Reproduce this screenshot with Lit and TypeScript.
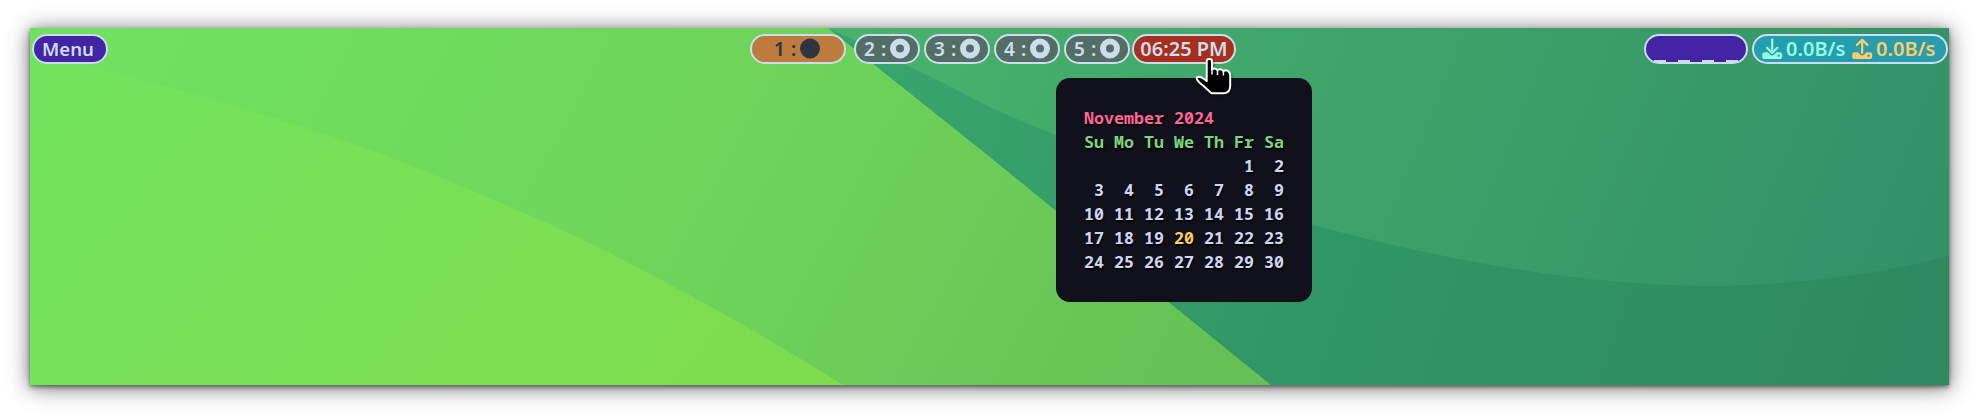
import { LitElement, html, css, svg } from "lit";
import { customElement } from "lit/decorators.js";

const WEEKS = [
  ["", "", "", "", "", "1", "2"],
  ["3", "4", "5", "6", "7", "8", "9"],
  ["10", "11", "12", "13", "14", "15", "16"],
  ["17", "18", "19", "20", "21", "22", "23"],
  ["24", "25", "26", "27", "28", "29", "30"],
];
const DAYS = ["Su", "Mo", "Tu", "We", "Th", "Fr", "Sa"];

@customElement("calendar-popup")
export class CalendarPopup extends LitElement {
  static styles = css`
    :host {
      display: block;
      box-sizing: border-box;
      width: 256px;
      height: 224px;
      padding: 28px 28px;
      border-radius: 14px;
      background: #11111b;
      color: #cdd6f4;
      font: 700 16.67px/24px "Noto Sans Mono", "DejaVu Sans Mono", monospace;
      text-shadow: 1px 2px 1px #000;
    }
    .month { color: #ff6699; white-space: pre; }
    .grid { display: grid; grid-template-columns: repeat(7, 20px); column-gap: 10px; grid-auto-rows: 24px; text-align: right; }
    .day { color: #7fd47f; }
    .today { color: #ffcc66; }
  `;
  render() {
    return html`
      <div class="month">November 2024</div>
      <div class="grid">
        ${DAYS.map((d) => html`<span class="day">${d}</span>`)}
        ${WEEKS.flat().map((d) => html`<span class=${d === "20" ? "today" : "date"}>${d}</span>`)}
      </div>
    `;
  }
}

const drive = (up: boolean) => svg`
  <path d=${up ? "M10.2 15V2.2M5 6.9L10.2 1.7L15.4 6.9" : "M10.2 1.5V14M5 9.8L10.2 15L15.4 9.8"}
    fill="none" stroke="currentColor" stroke-width="2.2" stroke-linecap="round" stroke-linejoin="round"/>
  <path fill="currentColor" fill-rule="evenodd" d="M2.8 14.2H5.8L8.4 16.8Q10.2 18.2 12 16.8L14.6 14.2H17.6A2.6 2.6 0 0 1 20.2 16.8V18.4A2.6 2.6 0 0 1 17.6 21H2.8A2.6 2.6 0 0 1 .2 18.4V16.8A2.6 2.6 0 0 1 2.8 14.2ZM16.6 16.4a1.2 1.2 0 1 0 .01 0Z"/>`;

@customElement("app-root")
export class AppRoot extends LitElement {
  static styles = css`
    :host { display: block; box-sizing: border-box; width: 1979px; height: 417px; padding: 28px 30px 32px; background: #fff; overflow: hidden; }
    .desktop { position: relative; width: 1919px; height: 357px; box-shadow: 0 2px 4px rgba(0,0,0,.45), 0 2px 18px rgba(0,0,0,.5), 0 4px 28px rgba(0,0,0,.12); }
    .wallpaper { position: absolute; inset: 0; display: block; }
    .bar { position: relative; display: grid; grid-template-columns: 1fr auto 1fr; padding: 6px 1px 0 2px; }
    .side, .center { display: flex; }
    .center { padding-left: 6px; }
    .right { justify-content: flex-end; gap: 4px; }
    .pill {
      box-sizing: border-box; height: 30px; border: 2px solid #cddcee; border-radius: 15px;
      display: flex; align-items: center; color: #cddcee; white-space: pre;
      font: 600 20px/26px "Noto Sans", sans-serif;
    }
    .menu { width: 76px; padding-left: 8px; font-size: 18.6px; background: #4224a4; }
    .ws { width: 66px; margin-right: 4px; padding-left: 8px; background: #546e66; }
    .num { display: flex; width: 26px; font-size: 19px; gap: 6px; }
    .active { width: 96px; margin-right: 8px; padding-left: 22px; background: #bd7b3d; color: #2e3440; }
    .clock { width: 104px; justify-content: center; background: #a6301b; margin-left: -2px; }
    .cava { width: 104px; background: #4224a4; align-items: flex-end; padding-left: 8px; }
    .levels { display: flex; gap: 12px; height: 2px; }
    .level { width: 12px; height: 2px; background: #cddcee; }
    .net { width: 196px; padding-left: 8px; background: #269caf; }
    .down, .up { display: flex; align-items: center; }
    .down { color: #94ffe0; width: 90px; }
    .up { color: #ffcc66; }
    .drive { margin-right: 3px; flex: none; }
    .popup { position: absolute; left: 1026px; top: 50px; }
    .pointer { position: absolute; left: 1164px; top: 29px; filter: drop-shadow(1px 2px 1px rgba(0,0,0,.4)); }
  `;

  render() {
    return html`
      <div class="desktop">
        <svg class="wallpaper" width="1919" height="357" viewBox="30 28 1919 357">
          <defs>
            <linearGradient id="g1" gradientUnits="userSpaceOnUse" x1="100" y1="28" x2="1100" y2="560"><stop offset="0" stop-color="#70e060"/><stop offset=".3" stop-color="#6fdb5d"/><stop offset=".65" stop-color="#6dd059"/><stop offset="1" stop-color="#65c155"/></linearGradient>
            <linearGradient id="g2" gradientUnits="userSpaceOnUse" x1="30" y1="28" x2="600" y2="480"><stop offset="0" stop-color="#72e35f"/><stop offset="1" stop-color="#7edd4f"/></linearGradient>
            <linearGradient id="g3" gradientUnits="userSpaceOnUse" x1="850" y1="28" x2="1850" y2="430"><stop offset="0" stop-color="#48b36c"/><stop offset="1" stop-color="#339167"/></linearGradient>
            <linearGradient id="g4" gradientUnits="userSpaceOnUse" x1="900" y1="60" x2="1900" y2="385"><stop offset="0" stop-color="#38a46d"/><stop offset=".4" stop-color="#319766"/><stop offset="1" stop-color="#2e8a5e"/></linearGradient>
          </defs>
          <rect x="30" y="28" width="1919" height="357" fill="url(#g4)"/>
          <path d="M828 28Q905 63 990 107Q1020 121 1056 135Q1190 191 1313 225Q1540 286 1716 286Q1840 284 1949 256V28Z" fill="url(#g3)"/>
          <path d="M30 28H828L990 157L1056 211L1271 385H30Z" fill="url(#g1)"/>
          <path d="M30 52Q210 93 379 153Q500 200 600 248Q727 312 843 385H30Z" fill="url(#g2)"/>
        </svg>
        <div class="bar">
          <div class="side"><div class="pill menu">Menu</div></div>
          <div class="center">
            <div class="pill active"><span class="num"><span>1</span><span>:</span></span>
              <svg width="20" height="22"><circle cx="10" cy="10.5" r="10" fill="currentColor"/></svg></div>
            ${[2, 3, 4, 5].map((n) => html`<div class="pill ws"><span class="num"><span>${n}</span><span>:</span></span><svg width="20" height="22"><circle cx="10" cy="10.5" r="7" fill="none" stroke="currentColor" stroke-width="6"/></svg></div>`)}
            <div class="pill clock">06:25 PM</div>
          </div>
          <div class="side right">
            <div class="pill cava"><div class="levels">${[1, 2, 3, 4].map(() => html`<i class="level"></i>`)}</div></div>
            <div class="pill net">
              <span class="down"><svg class="drive" width="21" height="22">${drive(false)}</svg>0.0B/s</span>
              <span class="up"><svg class="drive" width="21" height="22">${drive(true)}</svg>0.0B/s</span>
            </div>
          </div>
        </div>
        <calendar-popup class="popup"></calendar-popup>
        <svg class="pointer" width="38" height="38" viewBox="0 0 38 38">
          <path d="M12.7 4.2Q12.7 2 15.3 2Q18 2 18 4.2V12.2Q20 10.8 22 12Q23 12.6 23.4 13.4Q25 11.5 27.5 12.5Q29 13 29.4 14.4Q31 13 33 13.5Q36.2 15 36.2 18V29Q36 36 30 36.3H18Q16.5 36 15 34L9 28.5Q5 26 3 22.5Q2 20 4.5 19.8Q8 20 12.7 24Z" fill="#000" stroke="#fff" stroke-width="2" stroke-linejoin="round"/>
          <path d="M18 12V17.5M23.5 13V18M29.4 14V18.5" stroke="#fff" stroke-width="1.5"/>
        </svg>
      </div>
    `;
  }
}
